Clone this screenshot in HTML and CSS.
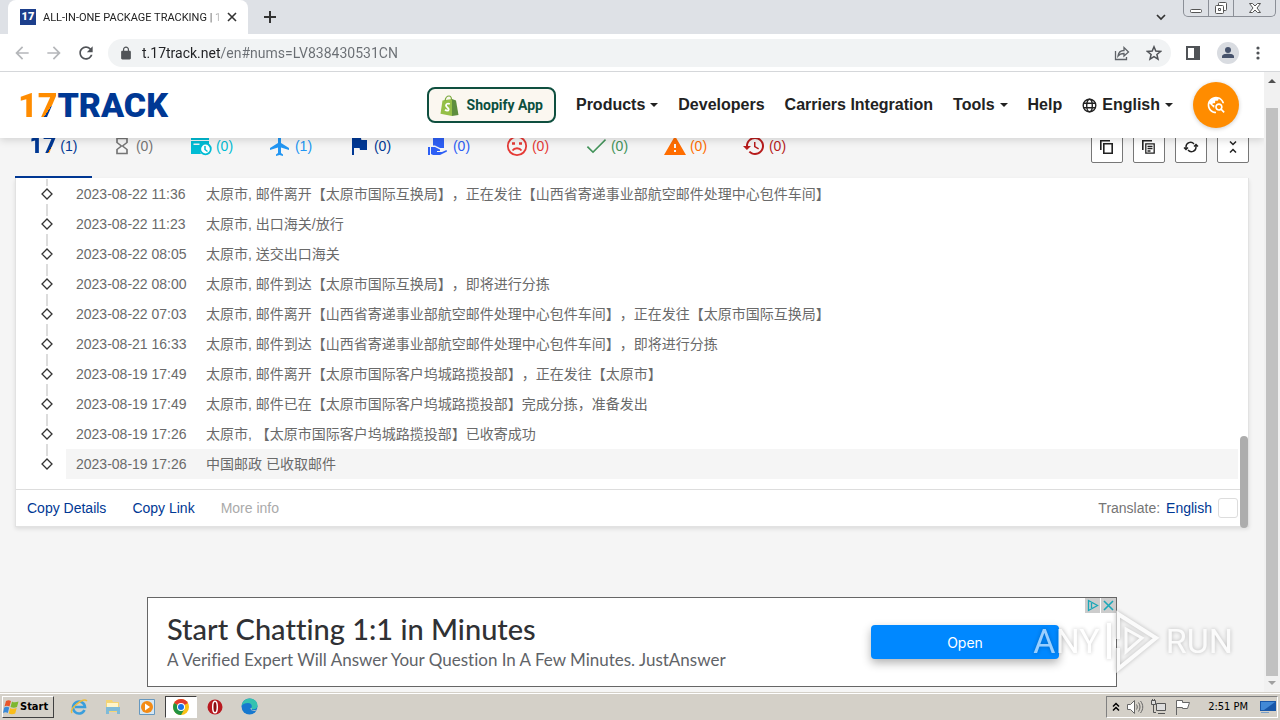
FILE: index.html
```
<!DOCTYPE html>
<html lang="en">
  <head>
    <meta charset="UTF-8" />
    <meta name="viewport" content="width=device-width, initial-scale=1.0" />
    <title>ALL-IN-ONE PACKAGE TRACKING | 17TRACK</title>
    <link rel="stylesheet" href="styles.css" />
  </head>
  <body>
    <!-- Shared icons -->
    <svg class="defs" width="0" height="0">
      <symbol id="node" viewBox="0 0 12 30">
        <path d="M6 0v7M6 25v5" stroke="#dcdcdc" stroke-width="2" />
        <path d="M6 10l5 5-5 5-5-5z" fill="#fff" stroke="#333" stroke-width="1.3" />
      </symbol>
      <symbol id="node-last" viewBox="0 0 12 30">
        <path d="M6 0v7" stroke="#dcdcdc" stroke-width="2" />
        <path d="M6 10l5 5-5 5-5-5z" fill="#fff" stroke="#333" stroke-width="1.3" />
      </symbol>
      <symbol id="chrome" viewBox="0 0 16 16">
        <circle cx="8" cy="8" r="8" fill="#fbc116" />
        <path d="M8 8L1.1 4A8 8 0 0 1 14.9 4z" fill="#e33b2e" />
        <path d="M8 8L1.1 4A8 8 0 0 0 8 16l3.5-6z" fill="#229342" />
        <circle cx="8" cy="8" r="4" fill="#fff" />
        <circle cx="8" cy="8" r="3" fill="#1a73e8" />
      </symbol>
    </svg>

    <div class="tab-strip">
      <div class="browser-tab">
        <span class="favicon">17</span>
        <span class="tab-title">ALL-IN-ONE PACKAGE TRACKING | 1</span>
        <button class="icon-btn" aria-label="Close tab">
          <svg width="10" height="10" viewBox="0 0 10 10"><path d="M1 1l8 8M9 1L1 9" stroke="#333" stroke-width="1.6" /></svg>
        </button>
      </div>
      <button class="icon-btn new-tab" aria-label="New tab">
        <svg width="12" height="12" viewBox="0 0 12 12"><path d="M6 0v12M0 6h12" stroke="#333" stroke-width="2" /></svg>
      </button>
      <button class="icon-btn tab-search" aria-label="Search tabs">
        <svg width="10" height="10" viewBox="0 0 10 10"><path d="M1 3l4 4 4-4" fill="none" stroke="#333" stroke-width="1.7" /></svg>
      </button>
      <div class="window-buttons">
        <button aria-label="Minimize">
          <svg width="14" height="14" viewBox="0 0 14 14"><rect x="1.500" y="8.500" width="11" height="3" rx="1" fill="#fff" stroke="#555" /></svg>
        </button>
        <button aria-label="Restore">
          <svg width="14" height="14" viewBox="0 0 14 14" fill="#fff" stroke="#555"><rect x="4.500" y="1.500" width="8" height="8" rx="1" /><rect x="1.500" y="4.500" width="8" height="8" rx="1" /><path d="M4.500 7.500h2v2h-2z" /></svg>
        </button>
        <button class="close" aria-label="Close">
          <svg width="14" height="14" viewBox="0 0 14 14"><path d="M1.500 2.500h3L7 5l2.500-2.500h3L9 7l3.500 4.500h-3L7 9l-2.500 2.500h-3L5 7z" fill="#fff" stroke="#555" /></svg>
        </button>
      </div>
    </div>

    <div class="toolbar">
      <div class="nav-buttons">
        <button class="icon-btn" aria-label="Back">
          <svg width="20" height="20" viewBox="0 0 24 24" fill="#b5b7ba"><path d="M20 11H7.830l5.590-5.590L12 4l-8 8 8 8 1.410-1.410L7.830 13H20v-2z" /></svg>
        </button>
        <button class="icon-btn" aria-label="Forward">
          <svg width="20" height="20" viewBox="0 0 24 24" fill="#b5b7ba"><path d="M4 11h12.170l-5.590-5.590L12 4l8 8-8 8-1.410-1.410L16.170 13H4v-2z" /></svg>
        </button>
        <button class="icon-btn" aria-label="Reload">
          <svg width="20" height="20" viewBox="0 0 24 24" fill="#505357"><path d="M17.650 6.350C16.200 4.900 14.210 4 12 4c-4.420 0-7.990 3.580-7.990 8s3.570 8 7.990 8c3.730 0 6.840-2.550 7.730-6h-2.080c-.82 2.330-3.040 4-5.650 4-3.310 0-6-2.690-6-6s2.690-6 6-6c1.660 0 3.140.69 4.220 1.780L13 11h7V4l-2.350 2.350z" /></svg>
        </button>
      </div>
      <div class="address-bar">
        <svg width="12" height="14" viewBox="3 0 18 23" fill="#505357"><path d="M18 8h-1V6c0-2.760-2.240-5-5-5S7 3.240 7 6v2H6c-1.100 0-2 .9-2 2v10c0 1.100.9 2 2 2h12c1.100 0 2-.9 2-2V10c0-1.100-.9-2-2-2zM9 8V6c0-1.660 1.340-3 3-3s3 1.340 3 3v2z" /></svg>
        <input type="text" aria-label="Address" value="t.17track.net/en#nums=LV838430531CN" />
        <button class="icon-btn" aria-label="Share">
          <svg width="16" height="16" viewBox="0 0 16 16" fill="none" stroke="#5f6368" stroke-width="1.300"><path d="M1.500 6v8.500h11V12M4 11c.5-4 2.500-5.500 6-5.500V2.500L14.500 7 10 11V8.500C7.500 8.500 5.500 9 4 11z" /></svg>
        </button>
        <button class="icon-btn" aria-label="Bookmark">
          <svg width="16" height="16" viewBox="0 0 16 16" fill="none" stroke="#505357" stroke-width="1.500"><path d="M8 1.800l1.800 4.300 4.700.4-3.600 3 1.100 4.600L8 11.700l-4 2.400 1.100-4.600-3.600-3 4.700-.4z" /></svg>
        </button>
      </div>
      <div class="toolbar-end">
        <button class="icon-btn" aria-label="Side panel">
          <svg width="14" height="14" viewBox="0 0 14 14"><path d="M1 1h12v12H1z" fill="none" stroke="#505357" stroke-width="2" /><path d="M8 0h6v14H8z" fill="#505357" /></svg>
        </button>
        <button class="icon-btn profile" aria-label="Profile">
          <svg width="12" height="12" viewBox="0 0 12 12" fill="#46526b"><circle cx="6" cy="3" r="3" /><path d="M0 11V9.500c0-2 3-2.700 6-2.700s6 .7 6 2.700V11z" /></svg>
        </button>
        <button class="icon-btn" aria-label="Menu">
          <svg width="4" height="14" viewBox="0 0 4 14" fill="#505357"><circle cx="2" cy="2" r="1.600" /><circle cx="2" cy="7" r="1.600" /><circle cx="2" cy="12" r="1.600" /></svg>
        </button>
      </div>
    </div>

    <div class="viewport">
      <div class="page">
        <header class="site-header">
          <a href="#" class="logo"><span class="logo-num">17</span>TRACK</a>
          <nav class="site-nav">
            <a href="#" class="shopify">
              <svg width="19" height="21" viewBox="0 0 19 21">
                <path d="M2.500 5.500L12 4v17L.5 18.800z" fill="#95bf47" />
                <path d="M12 4l4 1.500L18.500 20 12 21z" fill="#5e8e3e" />
                <path d="M5 6c.5-3.500 2.500-5 4-5s2.500 1.500 2.500 4" fill="none" stroke="#7aa83d" stroke-width="1.200" />
                <path d="M9.800 9c-1.800-.9-3.800-.2-3.800 1.500 0 1.900 3 2 2.700 4-.3 1.700-2.300 1.300-3.700.3" fill="none" stroke="#fff" stroke-width="1.800" />
              </svg>
              Shopify App
            </a>
            <a href="#" class="has-menu">Products</a>
            <a href="#">Developers</a>
            <a href="#">Carriers Integration</a>
            <a href="#" class="has-menu">Tools</a>
            <a href="#">Help</a>
            <a href="#" class="has-menu">
              <svg class="globe" width="15" height="15" viewBox="0 0 15 15" fill="none" stroke="#222" stroke-width="1.400"><circle cx="7.500" cy="7.500" r="6.300" /><ellipse cx="7.500" cy="7.500" rx="2.800" ry="6.300" /><path d="M1.700 5.300h11.600M1.700 9.700h11.600" /></svg>
              English
            </a>
            <button class="track-btn" aria-label="Track">
              <svg width="20" height="20" viewBox="0 0 24 24" fill="#fff"><path d="M19.300 16.900c.4-.7.7-1.500.7-2.400 0-2.500-2-4.500-4.500-4.500S11 12 11 14.500s2 4.500 4.500 4.500c.9 0 1.700-.3 2.400-.7l3.200 3.200 1.400-1.400-3.200-3.200zm-3.800.1c-1.400 0-2.500-1.100-2.500-2.500s1.100-2.500 2.500-2.500 2.500 1.100 2.500 2.500-1.100 2.500-2.500 2.500zM12 20v2C6.480 22 2 17.520 2 12S6.480 2 12 2c4.840 0 8.870 3.440 9.800 8h-2.070c-.64-2.460-2.400-4.470-4.730-5.410V5c0 1.100-.9 2-2 2h-2v2c0 .55-.45 1-1 1H8v2h2v3H9l-4.790-4.790C4.080 10.790 4 11.380 4 12c0 4.410 3.590 8 8 8z" /></svg>
            </button>
          </nav>
        </header>

        <div class="filters">
          <div class="filter-tabs">
            <button class="filter all active"><span class="mini-logo">17</span>(1)</button>
            <button class="filter pending">
              <svg width="20" height="20" viewBox="0 0 24 24" fill="currentColor"><path d="M5 2v6l5 4-5 4v6h14v-6l-5-4 5-4V2H5zm12 14.500V20H7v-3.500l5-4 5 4zm-5-5l-5-4V4h10v3.500l-5 4z" /></svg>(0)
            </button>
            <button class="filter info">
              <svg width="22" height="22" viewBox="0 0 22 22"><path d="M1 2h18v3H1zM1 6h18v4a6.500 6.500 0 0 0-8 9H1zM3.500 8.500v1.500h6V8.500z" fill="currentColor" fill-rule="evenodd" /><circle cx="15.500" cy="14" r="5.300" fill="#fff" stroke="currentColor" stroke-width="1.800" /><path d="M15 11v3.500l2.500 2" fill="none" stroke="currentColor" stroke-width="1.500" /></svg>(0)
            </button>
            <button class="filter transit">
              <svg width="22" height="22" viewBox="1 1 22 22" fill="currentColor"><path d="M21 16v-2l-8-5V3.500c0-.83-.67-1.500-1.500-1.500S10 2.670 10 3.500V9l-8 5v2l8-2.500V19l-2 1.500V22l3.500-1 3.500 1v-1.500L13 19v-5.500l8 2.500z" /></svg>(1)
            </button>
            <button class="filter pickup">
              <svg width="22" height="22" viewBox="1 1 22 22" fill="currentColor"><path d="M14.400 6L14 4H5v17h2v-7h5.600l.4 2h7V6z" /></svg>(0)
            </button>
            <button class="filter out">
              <svg width="22" height="22" viewBox="0 0 22 22" fill="currentColor"><path d="M6 1h11v12h-4l-5-2.500H6zM1 12h2v8H1zM4 12h4l5 2.500V16h-3v1h5l4.500-2 .5 1.500-7 3.500H6l-2-1z" /></svg>(0)
            </button>
            <button class="filter undelivered">
              <svg width="22" height="22" viewBox="0 0 22 22" fill="none" stroke="currentColor" stroke-width="1.800"><circle cx="11" cy="11" r="9.200" /><path d="M6.500 15.500c2-3 7-3 9 0" /><path d="M6 8.500h3M13 8.500h3" stroke-width="2.400" /></svg>(0)
            </button>
            <button class="filter delivered">
              <svg width="22" height="22" viewBox="1 1 22 22" fill="currentColor"><path d="M9 17L4 12l-1.200 1.200L9 19.300 22 6.200 21 5z" /></svg>(0)
            </button>
            <button class="filter alert">
              <svg width="22" height="22" viewBox="1 1 22 22" fill="currentColor"><path d="M1 21h22L12 2 1 21zm12-3h-2v-2h2v2zm0-4h-2v-4h2v4z" /></svg>(0)
            </button>
            <button class="filter expired">
              <svg width="22" height="22" viewBox="1 1 22 22" fill="currentColor"><path d="M13 3c-4.970 0-9 4.030-9 9H1l3.890 3.890.07.14L9 12H6c0-3.870 3.130-7 7-7s7 3.130 7 7-3.130 7-7 7c-1.930 0-3.680-.79-4.940-2.060l-1.420 1.420C8.270 19.990 10.510 21 13 21c4.970 0 9-4.030 9-9s-4.030-9-9-9zm-1 5v5l4.280 2.540.72-1.210-3.500-2.080V8H12z" /></svg>(0)
            </button>
          </div>
          <div class="actions">
            <button aria-label="Copy numbers">
              <svg width="16" height="16" viewBox="0 0 16 16" fill="none" stroke="#222" stroke-width="1.600"><path d="M1.800 11V1.800H11" /><path d="M4.800 4.800h8.400v9.400H4.800z" /></svg>
            </button>
            <button aria-label="Copy results">
              <svg width="16" height="16" viewBox="0 0 16 16" fill="none" stroke="#222" stroke-width="1.600"><path d="M1.800 11V1.800H11" /><path d="M4.800 4.800h8.400v9.400H4.800zM6.500 7.500h5M6.500 9.700h5M6.500 12h3" stroke-width="1.300" /></svg>
            </button>
            <button aria-label="Refresh">
              <svg width="16" height="16" viewBox="0 0 16 16" fill="none" stroke="#222" stroke-width="1.400"><path d="M3 10V8a4.500 4.500 0 0 1 8-3M13 6v2a4.500 4.500 0 0 1-8 3M1 8.500l2 2 2-2M11 7.500l2-2 2 2" /></svg>
            </button>
            <button aria-label="Collapse">
              <svg width="16" height="16" viewBox="0 0 16 16" fill="none" stroke="#222" stroke-width="1.500"><path d="M5 2.500l3 3 3-3M5 13.500l3-3 3 3" /></svg>
            </button>
          </div>
        </div>

        <main class="card">
          <ol class="events">
            <li><svg class="node"><use href="#node" /></svg><p><time>2023-08-22 11:36</time><span>太原市, 邮件离开【太原市国际互换局】，正在发往【山西省寄递事业部航空邮件处理中心包件车间】</span></p></li>
            <li><svg class="node"><use href="#node" /></svg><p><time>2023-08-22 11:23</time><span>太原市, 出口海关/放行</span></p></li>
            <li><svg class="node"><use href="#node" /></svg><p><time>2023-08-22 08:05</time><span>太原市, 送交出口海关</span></p></li>
            <li><svg class="node"><use href="#node" /></svg><p><time>2023-08-22 08:00</time><span>太原市, 邮件到达【太原市国际互换局】，即将进行分拣</span></p></li>
            <li><svg class="node"><use href="#node" /></svg><p><time>2023-08-22 07:03</time><span>太原市, 邮件离开【山西省寄递事业部航空邮件处理中心包件车间】，正在发往【太原市国际互换局】</span></p></li>
            <li><svg class="node"><use href="#node" /></svg><p><time>2023-08-21 16:33</time><span>太原市, 邮件到达【山西省寄递事业部航空邮件处理中心包件车间】，即将进行分拣</span></p></li>
            <li><svg class="node"><use href="#node" /></svg><p><time>2023-08-19 17:49</time><span>太原市, 邮件离开【太原市国际客户坞城路揽投部】，正在发往【太原市】</span></p></li>
            <li><svg class="node"><use href="#node" /></svg><p><time>2023-08-19 17:49</time><span>太原市, 邮件已在【太原市国际客户坞城路揽投部】完成分拣，准备发出</span></p></li>
            <li><svg class="node"><use href="#node" /></svg><p><time>2023-08-19 17:26</time><span>太原市, 【太原市国际客户坞城路揽投部】已收寄成功</span></p></li>
            <li class="hovered"><svg class="node"><use href="#node-last" /></svg><p><time>2023-08-19 17:26</time><span>中国邮政 已收取邮件</span></p></li>
          </ol>
          <div class="card-footer">
            <a href="#">Copy Details</a>
            <a href="#">Copy Link</a>
            <a href="#" class="muted">More info</a>
            <div class="translate">
              Translate: <a href="#">English</a>
              <button aria-label="Toggle translation"></button>
            </div>
          </div>
          <div class="card-scroll"></div>
        </main>

        <aside class="ad">
          <div class="ad-text">
            <h2>Start Chatting 1:1 in Minutes</h2>
            <p>A Verified Expert Will Answer Your Question In A Few Minutes. JustAnswer</p>
          </div>
          <button class="ad-open">Open</button>
          <div class="ad-corner">
            <button aria-label="AdChoices"><svg width="15" height="15" viewBox="0 0 15 15" fill="none" stroke="#1aa7b8" stroke-width="1.300"><path d="M3.500 2.500l9 5-9 5zM6.500 5v5" /></svg></button>
            <button aria-label="Close ad"><svg width="15" height="15" viewBox="0 0 15 15" fill="none" stroke="#1aa7b8" stroke-width="1.600"><path d="M3 3l9 9M12 3l-9 9" /></svg></button>
          </div>
        </aside>
      </div>

      <div class="scrollbar">
        <svg width="8" height="4" viewBox="0 0 8 4"><path d="M0 4l4-4 4 4z" fill="#505050" /></svg>
        <div class="thumb"></div>
        <svg width="8" height="4" viewBox="0 0 8 4"><path d="M0 0l4 4 4-4z" fill="#a0a0a0" /></svg>
      </div>

      <div class="watermark">
        <span>ANY</span>
        <svg width="54" height="64" viewBox="0 0 54 64" fill="none" stroke="#fff" stroke-width="4"><path d="M3 14v36M12 30V5l38 24-38 31V39" /><path d="M20 20l16 9-16 14z" stroke-width="3" /></svg>
        <span>RUN</span>
      </div>
    </div>

    <div class="taskbar">
      <button class="start">
        <svg width="17" height="16" viewBox="0 0 17 16"><path d="M3 2c2-1.200 3.500-1 5 0L6.500 7.500c-2-1-3.500-1-5 0z" fill="#e8552a" /><path d="M9 2.500c2 1.200 4 1 6.500 0L14 8c-2 1-4.500 1-6.500 0z" fill="#7db72f" /><path d="M1.200 8.500c2-1 3.500-1 5 0L4.800 14c-1.500-1-3-1-4.800 0z" fill="#3a8ad8" /><path d="M7.200 9c2 1.200 4 1 6.500 0l-1.500 5.500c-2 1-4.500 1-6.500 0z" fill="#f9bd1b" /></svg>
        Start
      </button>
      <div class="quick-launch">
        <button aria-label="Internet Explorer">
          <svg width="18" height="18" viewBox="0 0 18 18" fill="none"><path d="M14.500 12A6 6 0 1 1 15 9H5" stroke="#3a9edc" stroke-width="2.600" /><path d="M2 15C-1 11 13-1 17 3" stroke="#eebc3a" stroke-width="1.500" /></svg>
        </button>
        <button aria-label="Explorer">
          <svg width="18" height="18" viewBox="0 0 18 18"><path d="M2 2h6l1 2h6v10H2z" fill="#f3d475" /><path d="M3 5h11v5H3z" fill="#fff5c9" /><path d="M2 9h14v7h-3v-3H5v3H2z" fill="#7fbbd8" /></svg>
        </button>
        <button aria-label="Media Player">
          <svg width="18" height="18" viewBox="0 0 18 18"><path d="M1.500 1.500h15v15h-15z" fill="#d5e7f4" stroke="#6698bf" /><circle cx="9" cy="9" r="6" fill="#f38b16" /><path d="M7 5.500l5 3.500-5 3.500z" fill="#fff" /></svg>
        </button>
        <button class="pressed" aria-label="Chrome">
          <svg width="16" height="16"><use href="#chrome" /></svg>
        </button>
        <button aria-label="Opera">
          <svg width="16" height="16" viewBox="0 0 16 16"><circle cx="8" cy="8" r="7.500" fill="#b91920" /><ellipse cx="8" cy="8" rx="2.300" ry="5.800" fill="#8d0d12" stroke="#fff" stroke-width="1.500" /></svg>
        </button>
        <button aria-label="Edge">
          <svg width="17" height="17" viewBox="0 0 17 17"><circle cx="8.500" cy="8.500" r="8" fill="#1678cf" /><path d="M.6 8C1 3.500 4.500.5 8.700.5c5 0 7.800 3.500 7.800 7 0 2.300-1.700 3.800-4 3.800-2 0-2.800-.8-2-1.800 1-2-.5-4.500-3.500-4.500C4 5 1.500 6 .6 8z" fill="#35c2b0" /><path d="M9.500 10c0 2.500 3 3.500 6 2.500l1.200-1.500c-1 1-2.500 1.400-4 1.300-2-.1-2.700-1-2-2.300z" fill="#d4d0c8" /></svg>
        </button>
      </div>
      <div class="tray">
        <svg width="8" height="10" viewBox="0 0 8 10" fill="none" stroke="#000" stroke-width="1.500"><path d="M1 4.500l3-3 3 3M1 8.500l3-3 3 3" /></svg>
        <svg width="18" height="16" viewBox="0 0 18 16" fill="#fff" stroke="#666"><path d="M1.500 5.500h3l4-4v13l-4-4h-3z" /><path d="M10.500 5.500c1 2 1 3 0 5M12.500 3.500c2 3 2 6 0 9M14.500 2c3 4 3 8 0 12" fill="none" /></svg>
        <svg width="18" height="16" viewBox="0 0 18 16" fill="#ddd" stroke="#555"><path d="M6.500 4.500h9v7h-9zM8 14.500h7M1.500 1.500h4v4h-4z" /><path d="M3.500 6v7.500H6M2.500 0v2M4.500 0v2" fill="none" /></svg>
        <svg width="18" height="16" viewBox="0 0 18 16" fill="#fff" stroke="#666"><path d="M2.500 16V1.500h6v2h7l-2 6h-5v-1h-6" /></svg>
        <span class="clock">2:51 PM</span>
        <svg width="16" height="14" viewBox="0 0 16 14"><path d="M0 1h16v10H0z" fill="#1957a8" /><path d="M1 2h14L4 10H1z" fill="#4289d6" /><path d="M1 12h8v1H1z" fill="#7a9fc7" /></svg>
      </div>
    </div>
  </body>
</html>
```
FILE: styles.css
```
:root {
  --blue: #003894;
  --orange: #ff8c00;
  --page: #f5f5f5;
  --strip: #dee1e6;
  --classic: #d4d0c8;
  --text: #222;
}

* {
  box-sizing: border-box;
}

body {
  margin: 0;
  height: 100vh;
  display: flex;
  flex-direction: column;
  overflow: hidden;
  background: var(--page);
  color: var(--text);
  font-family: "Liberation Sans", "Noto Sans CJK SC", Arial, sans-serif;
  font-size: 14px;
}

a {
  color: inherit;
  text-decoration: none;
}

button {
  font: inherit;
  color: inherit;
  padding: 0;
  border: none;
  background: none;
  cursor: pointer;
}

svg {
  display: block;
  flex: none;
}

.defs {
  position: absolute;
}

.icon-btn {
  display: flex;
  align-items: center;
  justify-content: center;
}

/* Browser chrome */
.tab-strip {
  display: flex;
  height: 34px;
  padding-left: 8px;
  background: var(--strip);
}

.browser-tab {
  display: flex;
  align-items: center;
  width: 240px;
  padding: 0 11px 0 12px;
  border-radius: 8px 8px 0 0;
  background: #fff;
}

.favicon {
  flex: none;
  width: 16px;
  height: 16px;
  margin-right: 7px;
  background: #1d3f8c;
  color: #fff;
  font: 900 11px/16px Roboto, sans-serif;
  text-align: center;
}

.tab-title {
  flex: 1;
  font-family: Roboto, sans-serif;
  font-size: 11px;
  white-space: nowrap;
  mask-image: linear-gradient(90deg, #000 164px, transparent 180px);
}

.new-tab {
  width: 44px;
}

.tab-search {
  margin-left: auto;
  margin-right: 17px;
}

.window-buttons {
  display: flex;
  height: 17px;
  margin-right: 4px;
  border: 1px solid #8b8f97;
  border-top: none;
  border-radius: 0 0 5px 5px;
}

.window-buttons button {
  display: flex;
  justify-content: center;
  align-items: center;
  width: 25px;
  border-right: 1px solid #8b8f97;
}

.window-buttons .close {
  width: 41px;
  border-right: none;
}

.toolbar {
  display: flex;
  align-items: center;
  height: 38px;
  padding: 0 20px 0 12px;
  border-bottom: 1px solid #d5d7da;
  background: #fff;
}

.nav-buttons {
  display: flex;
  gap: 12px;
  margin-right: 12px;
}

.address-bar {
  flex: 1;
  display: flex;
  align-items: center;
  gap: 16px;
  height: 28px;
  padding: 0 9px 0 12px;
  border-radius: 14px;
  background: #f1f3f4;
}

.address-bar input {
  flex: 1;
  margin-left: -6px;
  padding: 0;
  border: none;
  outline: none;
  font-family: Roboto, sans-serif;
  font-size: 14px;
  color: transparent;
  background: linear-gradient(90deg, #202124 79px, #6a6e73 79px);
  background-clip: text;
  -webkit-background-clip: text;
}

.toolbar-end {
  display: flex;
  align-items: center;
  gap: 17px;
  margin-left: 15px;
}

.profile {
  width: 22px;
  height: 22px;
  border-radius: 50%;
  background: #d9dce1;
}

/* Page */
.viewport {
  flex: 1;
  display: flex;
  position: relative;
  min-height: 0;
}

.page {
  flex: 1;
  overflow: hidden;
}

.site-header {
  position: relative;
  z-index: 2;
  display: flex;
  align-items: center;
  justify-content: space-between;
  height: 66px;
  padding: 0 25px 0 18px;
  background: #fff;
  box-shadow: 0 2px 8px rgba(0, 0, 0, 0.15);
}

.logo {
  color: var(--blue);
  font: 900 34px/40px Roboto, sans-serif;
}

.logo-num {
  color: transparent;
  background: linear-gradient(125deg, var(--orange) 72%, var(--blue) 72%);
  background-clip: text;
  -webkit-background-clip: text;
}

.site-nav {
  display: flex;
  align-items: center;
  gap: 20px;
  font-size: 16px;
  font-weight: bold;
}

.site-nav a {
  display: flex;
  align-items: center;
  gap: 5px;
}

.has-menu::after {
  content: "";
  border: 4px solid transparent;
  border-top-color: var(--text);
  border-bottom: none;
}

.site-nav .shopify {
  gap: 8px;
  height: 36px;
  padding: 0 11px;
  border: 2px solid #0f4f3f;
  border-radius: 8px;
  background: #fbf7f0;
  color: #0b4f3f;
  font-family: Roboto, sans-serif;
  font-size: 14px;
}

.track-btn {
  display: flex;
  align-items: center;
  justify-content: center;
  width: 46px;
  height: 46px;
  border-radius: 50%;
  background: var(--orange);
  box-shadow: 0 1px 4px rgba(0, 0, 0, 0.2);
}

/* Scrolled partly under the header */
.filters {
  display: flex;
  justify-content: space-between;
  height: 64px;
  margin-top: -24px;
  padding: 0 15px;
}

.filter-tabs {
  display: flex;
  gap: 2px;
}

.filter {
  display: flex;
  align-items: center;
  justify-content: center;
  gap: 4px;
  width: 77px;
  padding-top: 2px;
  border-bottom: 2px solid transparent;
}

.filter.active {
  border-bottom-color: var(--blue);
}

.mini-logo {
  color: transparent;
  background: linear-gradient(125deg, var(--blue) 72%, var(--orange) 72%);
  background-clip: text;
  -webkit-background-clip: text;
  font: 900 23px/24px Roboto, sans-serif;
}

.all,
.pickup {
  color: var(--blue);
}

.pending {
  color: #757575;
}

.info {
  color: #00bcd4;
}

.transit {
  color: #2196f3;
}

.out {
  color: #2d5ff5;
}

.undelivered {
  color: #e53935;
}

.delivered {
  color: #43935a;
}

.alert {
  color: #ff6d00;
}

.expired {
  color: #b71c1c;
}

.actions {
  display: flex;
  align-items: center;
  gap: 10px;
  padding-top: 2px;
}

.actions button {
  display: flex;
  align-items: center;
  justify-content: center;
  width: 32px;
  height: 32px;
  border: 1px solid #777;
  border-radius: 2px;
  background: #fff;
}

.card {
  position: relative;
  margin: 0 15px;
  border: 1px solid #e2e2e2;
  border-top: none;
  background: #fff;
  box-shadow: 0 2px 4px rgba(0, 0, 0, 0.1);
}

.events {
  margin: 0;
  padding: 1px 10px 10px 25px;
  list-style: none;
  color: #6a6a6a;
  text-spacing-trim: space-all;
}

.events li {
  display: flex;
  gap: 13px;
}

.node {
  width: 12px;
  height: 30px;
}

.events p {
  flex: 1;
  display: flex;
  gap: 16px;
  margin: 0;
  padding-left: 10px;
  line-height: 30px;
  white-space: nowrap;
}

.events time {
  width: 114px;
}

.hovered p {
  background: var(--page);
}

.card-footer {
  display: flex;
  align-items: center;
  gap: 26px;
  height: 37px;
  padding: 0 10px 0 11px;
  border-top: 1px solid #ddd;
  color: var(--blue);
}

.card-footer .muted {
  color: #aaa;
}

.translate {
  display: flex;
  align-items: center;
  gap: 6px;
  margin-left: auto;
  color: #757575;
}

.translate a {
  color: var(--blue);
}

.translate button {
  width: 20px;
  height: 20px;
  border: 1px solid #ddd;
  border-radius: 3px;
  background: #fff;
}

.card-scroll {
  position: absolute;
  right: 0;
  bottom: -2px;
  width: 8px;
  height: 92px;
  border-radius: 4px;
  background: #adadad;
}

.ad {
  position: relative;
  display: flex;
  align-items: center;
  justify-content: space-between;
  max-width: 970px;
  height: 90px;
  margin: 70px auto 0;
  padding: 0 57px 0 19px;
  border: 1px solid #666;
  background: #fff;
}

.ad-text {
  font-family: Lato, sans-serif;
  font-variant-ligatures: none;
}

.ad h2 {
  margin: 0;
  color: #303134;
  font-size: 29px;
  font-weight: 500;
  line-height: 36px;
}

.ad p {
  margin: 0;
  color: #5f6368;
  font-size: 17px;
  line-height: 26px;
}

.ad-open {
  width: 188px;
  height: 34px;
  border-radius: 4px;
  background: #08f;
  box-shadow: 0 4px 10px rgba(0, 0, 0, 0.3);
  color: #fff;
  font: 14px Inter, sans-serif;
}

.ad-corner {
  position: absolute;
  top: 0;
  right: 0;
  display: flex;
  gap: 1px;
}

.ad-corner button {
  background: #ccc;
}

.scrollbar {
  display: flex;
  flex-direction: column;
  align-items: center;
  width: 16px;
  padding: 7px 0;
  background: #f1f1f1;
}

.thumb {
  flex: 1;
  width: 12px;
  margin: 25px 0 5px;
  background: #c1c1c1;
}

.watermark {
  position: absolute;
  z-index: 3;
  right: 47px;
  bottom: 19px;
  display: flex;
  align-items: center;
  gap: 6px;
  color: #fff;
  font: 34px/64px Roboto, sans-serif;
  opacity: 0.6;
  filter: drop-shadow(0 0 2px rgba(0, 0, 0, 0.4));
  pointer-events: none;
}

/* Taskbar */
.taskbar {
  display: flex;
  align-items: center;
  height: 28px;
  padding: 0 2px;
  border-top: 1px solid var(--classic);
  background: var(--classic);
  box-shadow: inset 0 1px #fff;
  font-family: "DejaVu Sans Condensed", "DejaVu Sans", sans-serif;
  font-size: 11px;
  color: #000;
}

.start {
  display: flex;
  align-items: center;
  width: 52px;
  height: 22px;
  border: 1px solid;
  border-color: #fff #404040 #404040 #fff;
  font-weight: bold;
}

.quick-launch {
  display: flex;
  gap: 2px;
  margin-left: 9px;
}

.quick-launch button {
  display: flex;
  align-items: center;
  justify-content: center;
  width: 32px;
  height: 22px;
}

.quick-launch .pressed {
  border: 1px solid;
  border-color: #404040 #fff #fff #404040;
  background: #fff;
}

.tray {
  display: flex;
  align-items: center;
  gap: 6px;
  height: 22px;
  margin-left: auto;
  padding: 0 1px 0 5px;
  border: 1px solid;
  border-color: #808080 #fff #fff #808080;
}

.clock {
  margin: 0 6px 0 10px;
}
```
